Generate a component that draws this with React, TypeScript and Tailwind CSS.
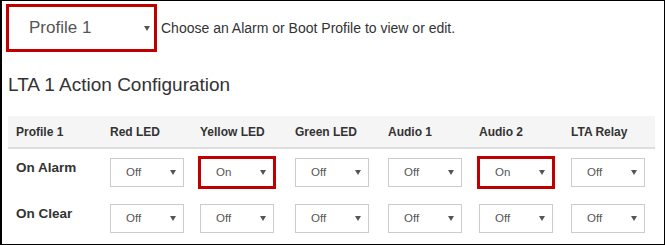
import React from "react";

const cols = [
  { name: "Red LED", w: "w-[90px]" },
  { name: "Yellow LED", w: "w-[95px]" },
  { name: "Green LED", w: "w-[93px]" },
  { name: "Audio 1", w: "w-[91px]" },
  { name: "Audio 2", w: "w-[92px]" },
  { name: "LTA Relay", w: "w-[92px]" },
];

const rows = [
  { label: "On Alarm", values: ["Off", "On", "Off", "Off", "On", "Off"] },
  { label: "On Clear", values: ["Off", "Off", "Off", "Off", "Off", "Off"] },
];

function Caret({ className }: { className?: string }) {
  return (
    <svg width="6" height="5" viewBox="0 0 6 5" className={className}>
      <path d="M0 0h6L3 5z" fill="#555" />
    </svg>
  );
}

function Select({ value, hot }: { value: string; hot?: boolean }) {
  return (
    <div
      className={
        "flex h-[29px] w-[74px] items-center justify-between border border-[#ccc] bg-white pl-[15px] pr-[7px] text-[11.5px] text-[#555] " +
        (hot ? "outline-3 outline-offset-[-1px] outline-[#c00000]" : "")
      }
    >
      <span>{value}</span>
      <Caret />
    </div>
  );
}

export default function App() {
  return (
    <div className="h-[245px] w-[665px] overflow-hidden border border-l-2 border-black bg-white font-['Liberation_Sans',Arial,sans-serif] text-[#333]">
      <div className="ml-[6px] mt-[5px] flex items-center">
        <div className="flex h-[44px] w-[147px] items-center justify-between border border-[#ccc] pl-[20px] pr-[4px] text-[17px] text-[#555] outline-3 outline-offset-[-1px] outline-[#c00000]">
          <span>Profile 1</span>
          <Caret />
        </div>
        <span className="ml-[6px] text-[14px]">Choose an Alarm or Boot Profile to view or edit.</span>
      </div>

      <h3 className="ml-[6px] mt-[24px] text-[19px] leading-[21px]">LTA 1 Action Configuration</h3>

      <table className="ml-[6px] mt-[21px] w-[647px] table-fixed border-collapse">
        <thead>
          <tr className="bg-[#f5f5f5]">
            <th className="h-[32px] w-[94px] border-b-2 border-[#ddd] px-[8px] text-left text-[12px] font-bold">
              Profile 1
            </th>
            {cols.map((c) => (
              <th
                key={c.name}
                className={`h-[32px] ${c.w} border-b-2 border-[#ddd] px-[8px] text-left text-[12px] font-bold`}
              >
                {c.name}
              </th>
            ))}
          </tr>
        </thead>
        <tbody>
          {rows.map((r, ri) => (
            <tr key={r.label}>
              <td
                className={`px-[8px] align-top text-[13.5px] font-bold leading-[19px] ${
                  ri === 0 ? "pb-[8px] pt-[9px]" : "pb-[8px] pt-[9px]"
                }`}
              >
                {r.label}
              </td>
              {r.values.map((v, i) => (
                <td key={i} className="px-[8px] pb-[8px] pt-[9px] align-top">
                  <Select value={v} hot={ri === 0 && (i === 1 || i === 4)} />
                </td>
              ))}
            </tr>
          ))}
        </tbody>
      </table>
    </div>
  );
}
